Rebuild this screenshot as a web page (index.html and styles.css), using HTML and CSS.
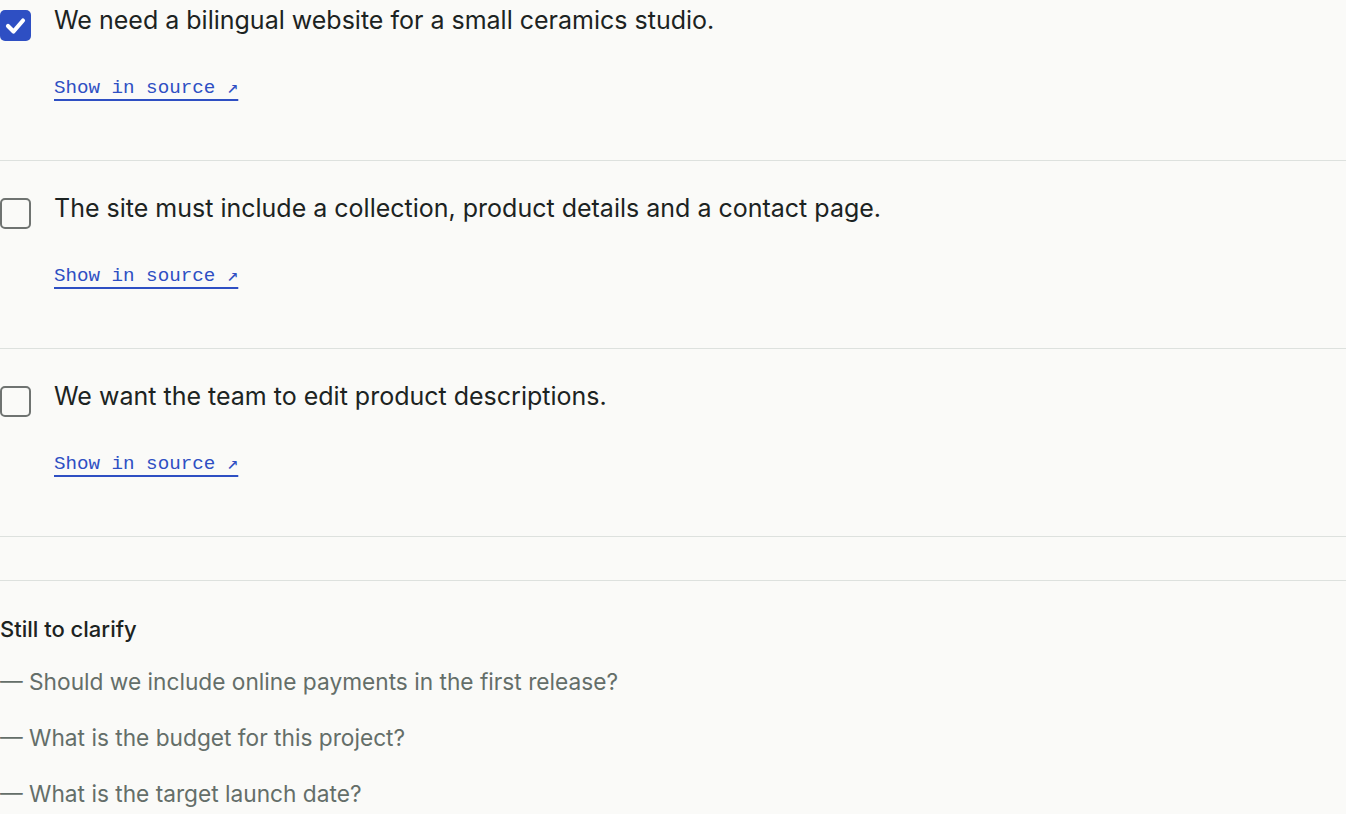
FILE: index.html
```html
<!DOCTYPE html>
<html lang="en">
<head>
<meta charset="utf-8">
<title>Requirements</title>
<link rel="stylesheet" href="styles.css">
</head>
<body>
<main class="page">
  <ul class="reqs">
    <li class="req">
      <span class="box checked">
        <svg viewBox="0 0 31 31" width="31" height="31"><path d="M8 16 L13.5 21.5 L23 10.5" fill="none" stroke="#fff" stroke-width="4.2" stroke-linecap="round" stroke-linejoin="round"/></svg>
      </span>
      <div class="req-body">
        <p class="req-text">We need a bilingual website for a small ceramics studio.</p>
        <a class="src" href="#">Show in source ↗</a>
      </div>
    </li>
    <li class="req">
      <span class="box"></span>
      <div class="req-body">
        <p class="req-text">The site must include a collection, product details and a contact page.</p>
        <a class="src" href="#">Show in source ↗</a>
      </div>
    </li>
    <li class="req">
      <span class="box"></span>
      <div class="req-body">
        <p class="req-text">We want the team to edit product descriptions.</p>
        <a class="src" href="#">Show in source ↗</a>
      </div>
    </li>
  </ul>
  <div class="spacer"></div>
  <section class="clarify">
    <h2 class="clarify-title">Still to clarify</h2>
    <ul class="questions">
      <li>— Should we include online payments in the first release?</li>
      <li>— What is the budget for this project?</li>
      <li>— What is the target launch date?</li>
    </ul>
  </section>
</main>
</body>
</html>
```
FILE: styles.css
```css
html, body {
  margin: 0;
  padding: 0;
  background: #fafaf8;
}
body {
  font-family: Inter, "Noto Sans", sans-serif;
  color: #1c2322;
}
.page {
  margin-top: -27px;
}
.reqs {
  list-style: none;
  margin: 0;
  padding: 0;
}
.req {
  display: flex;
  align-items: flex-start;
  gap: 23px;
  height: 188px;
  box-sizing: border-box;
  padding-top: 31px;
  border-bottom: 1px solid #dde1de;
}
.box {
  flex: none;
  width: 31px;
  height: 31px;
  margin-top: 6px;
  box-sizing: border-box;
  border: 2px solid #6f7371;
  border-radius: 5px;
  background: #fafaf8;
  display: flex;
}
.box.checked {
  border: none;
  background: #2e4fc3;
}
.req-body {
  display: flex;
  flex-direction: column;
  align-items: flex-start;
}
.req-text {
  margin: 0;
  font-size: 25px;
  line-height: 32px;
  letter-spacing: 0;
  color: #1c2322;
}
.src {
  margin-top: 40px;
  font-family: "Liberation Mono", "DejaVu Sans Mono", monospace;
  font-size: 19.2px;
  line-height: 24px;
  color: #2e4fc3;
  text-decoration: underline;
  text-decoration-thickness: 2px;
  text-underline-offset: 6px;
}
.spacer {
  height: 44px;
  box-sizing: border-box;
  border-bottom: 1px solid #dde1de;
}
.clarify {
  padding-top: 33px;
}
.clarify-title {
  margin: 0;
  font-size: 22px;
  line-height: 30px;
  font-weight: 500;
  color: #1c2322;
}
.questions {
  list-style: none;
  margin: 22px 0 0;
  padding: 0;
  display: flex;
  flex-direction: column;
  gap: 24px;
}
.questions li {
  font-size: 22.7px;
  line-height: 32px;
  color: #646e69;
}
```
